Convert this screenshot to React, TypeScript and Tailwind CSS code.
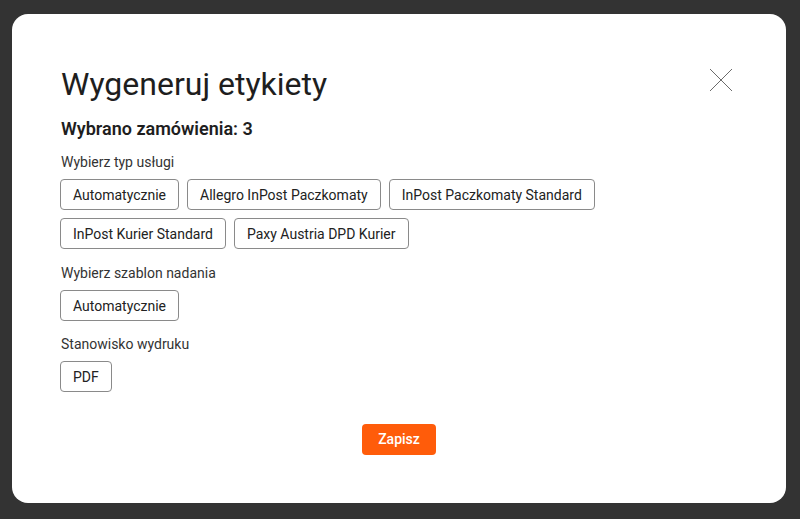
import React from "react";

const Chip = ({ label }: { label: string }) => (
  <button className="h-[31px] px-3 border border-[#8a8a8a] rounded-[4px] bg-white text-[14px] text-[#222] leading-none">
    {label}
  </button>
);

export default function App() {
  return (
    <div
      className="w-[800px] h-[519px] bg-[#333333] pt-[14px] pl-[12px] overflow-hidden"
      style={{ fontFamily: "Roboto, 'Liberation Sans', sans-serif" }}
    >
      <div className="w-[774px] h-[489px] bg-white rounded-[16px] pl-[48px] pr-[53px] pt-[50px] flex flex-col">
        <div className="flex items-start justify-between">
          <h1 className="pl-[1px] text-[32px] leading-[40px] font-normal text-[#1e1e1e]">Wygeneruj etykiety</h1>
          <svg width="24" height="24" viewBox="0 0 24 24" className="mt-[4px]">
            <path d="M1 1L23 23M23 1L1 23" stroke="#6b6b6b" strokeWidth="1" fill="none" />
          </svg>
        </div>
        <div className="mt-[13px] pl-[1px] text-[18px] font-semibold text-[#1e1e1e] leading-[24px]">Wybrano zamówienia: 3</div>
        <div className="mt-[11px] pl-[1px] text-[14px] text-[#333] leading-[20px]">Wybierz typ usługi</div>
        <div className="mt-[7px] flex flex-wrap gap-x-[8px] gap-y-[8px] w-[560px]">
          <Chip label="Automatycznie" />
          <Chip label="Allegro InPost Paczkomaty" />
          <Chip label="InPost Paczkomaty Standard" />
          <Chip label="InPost Kurier Standard" />
          <Chip label="Paxy Austria DPD Kurier" />
        </div>
        <div className="mt-[14px] pl-[1px] text-[14px] text-[#333] leading-[20px]">Wybierz szablon nadania</div>
        <div className="mt-[7px] flex">
          <Chip label="Automatycznie" />
        </div>
        <div className="mt-[13px] pl-[1px] text-[14px] text-[#333] leading-[20px]">Stanowisko wydruku</div>
        <div className="mt-[7px] flex">
          <Chip label="PDF" />
        </div>
        <div className="mt-[32px] flex justify-center pl-[5px]">
          <button className="h-[31px] w-[74px] rounded-[4px] bg-[#ff5c0a] text-white text-[14px] font-medium">
            Zapisz
          </button>
        </div>
      </div>
    </div>
  );
}
